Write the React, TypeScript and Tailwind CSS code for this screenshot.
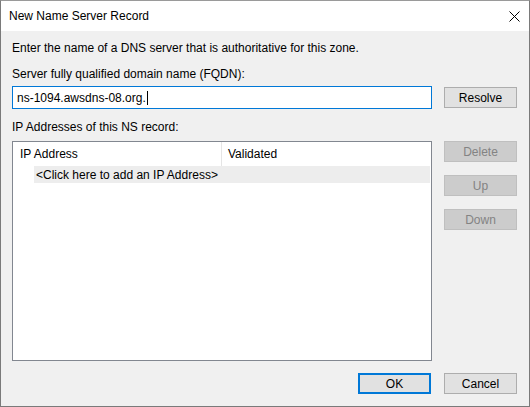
import React from "react";

const font = { fontFamily: '"Segoe UI", "Liberation Sans", Arial, sans-serif' };

function Btn({ label, disabled, primary }: { label: string; disabled?: boolean; primary?: boolean }) {
  const cls = disabled
    ? "bg-[#cccccc] border border-[#bfbfbf] text-[#838383]"
    : primary
    ? "bg-[#e1e1e1] border-2 border-[#0078d7] text-black"
    : "bg-[#e1e1e1] border border-[#adadad] text-black";
  return (
    <div className={`w-[73px] h-[21px] flex items-center justify-center text-[12px] leading-none ${cls}`}>
      {label}
    </div>
  );
}

export default function App() {
  return (
    <div
      style={font}
      className="w-[530px] h-[407px] border border-[#7a7a7a] border-t-[#9a9a9a] flex flex-col bg-[#f0f0f0] text-black text-[12px] overflow-hidden"
    >
      <div className="h-[30px] bg-white flex items-center justify-between pl-[8px] pr-[9px] shrink-0">
        <span className="text-[12px] leading-[15px] pt-[1px]">New Name Server Record</span>
        <svg width="11" height="11" viewBox="0 0 11 11" className="mt-[1px]">
          <path d="M0.5 0.5 L10.5 10.5 M10.5 0.5 L0.5 10.5" stroke="#000" strokeWidth="1" fill="none" />
        </svg>
      </div>
      <div className="flex-1 flex flex-col pl-[11px] pr-[11px]">
        <div className="mt-[10px] leading-[15px]">Enter the name of a DNS server that is authoritative for this zone.</div>
        <div className="mt-[11px] leading-[15px]">Server fully qualified domain name (FQDN):</div>
        <div className="mt-[4px] flex items-start">
          <div className="w-[420px] h-[23px] border border-[#0078d7] bg-white flex items-center pl-[4px] leading-none">
            <span>ns-1094.awsdns-08.org.</span>
            <span className="inline-block w-[1px] h-[14px] bg-black ml-[1px]" />
          </div>
          <div className="ml-[12px] mt-[1px]">
            <Btn label="Resolve" />
          </div>
        </div>
        <div className="mt-[11px] leading-[15px]">IP Addresses of this NS record:</div>
        <div className="mt-[6px] flex items-start">
          <div className="w-[420px] h-[220px] border border-[#828790] bg-white flex flex-col">
            <div className="h-[24px] flex items-stretch shrink-0">
              <div className="w-[209px] border-r border-[#e5e5e5] flex items-center pl-[7px]">IP Address</div>
              <div className="flex-1 flex items-center pl-[6px]">Validated</div>
            </div>
            <div className="h-[17px] ml-[21px] mr-[1px] bg-[#ededed] flex items-center pl-[2px] leading-none">
              &lt;Click here to add an IP Address&gt;
            </div>
          </div>
          <div className="ml-[12px] flex flex-col gap-[13px]">
            <Btn label="Delete" disabled />
            <Btn label="Up" disabled />
            <Btn label="Down" disabled />
          </div>
        </div>
        <div className="mt-[12px] flex justify-end gap-[13px] pr-[1px]">
          <Btn label="OK" primary />
          <Btn label="Cancel" />
        </div>
      </div>
    </div>
  );
}
